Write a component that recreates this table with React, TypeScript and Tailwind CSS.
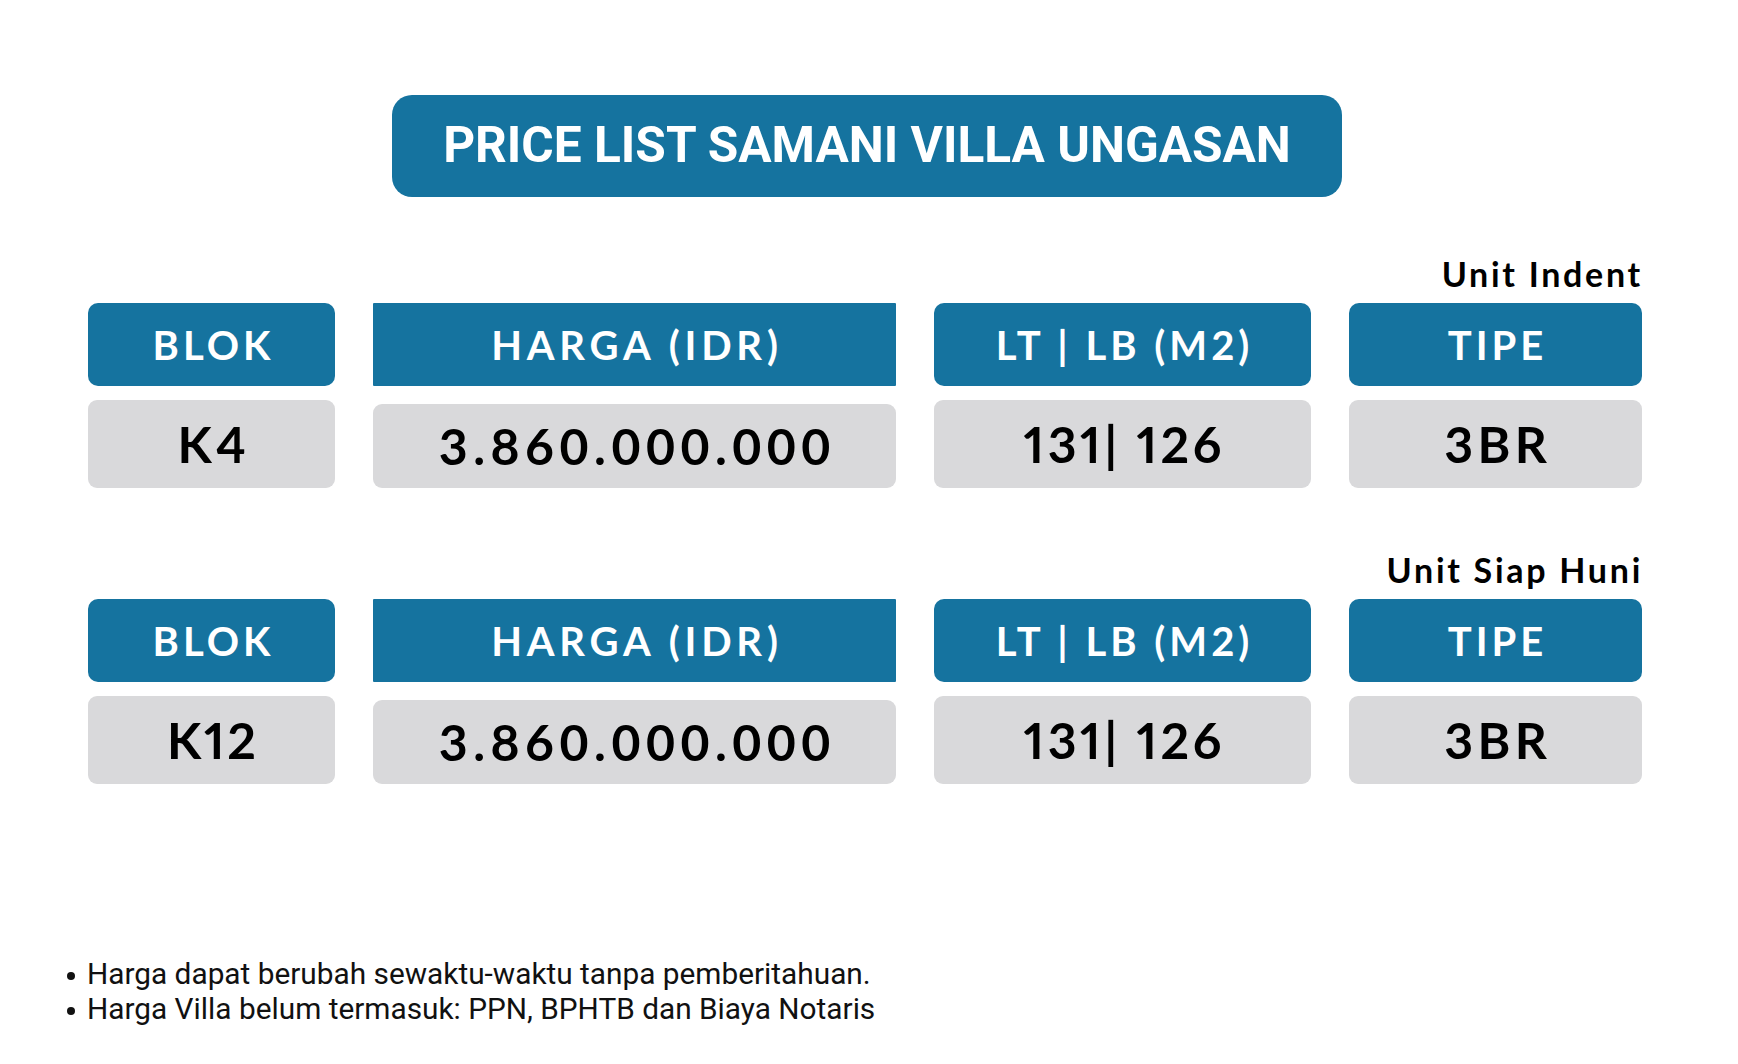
import React from "react";

type Row = { blok: string; blokTrack: string; harga: string; luas: string; tipe: string };

function HeaderCell({
  children,
  square,
  track,
}: {
  children: React.ReactNode;
  square?: boolean;
  track: string;
}) {
  return (
    <div
      className={
        "h-[83px] bg-[#15739f] flex items-center justify-center text-white text-[40px] font-bold font-['Lato',sans-serif] leading-none " +
        (square ? "rounded-[1px]" : "rounded-[10px]")
      }
    >
      <span className={track}>{children}</span>
    </div>
  );
}

function DataCell({
  children,
  short,
  track,
}: {
  children: React.ReactNode;
  short?: boolean;
  track: string;
}) {
  return (
    <div
      className={
        "bg-[#d9d9db] rounded-[9px] flex items-center justify-center text-black text-[50px] font-bold font-['Lato',sans-serif] leading-none " +
        (short ? "h-[84px] self-end" : "h-[88px]")
      }
    >
      <span className={track}>{children}</span>
    </div>
  );
}

function Section({ label, row, top }: { label: string; row: Row; top: string }) {
  return (
    <div className={"ml-[88px] w-[1554px] " + top}>
      <div className="flex justify-end mr-[-1px] h-[34px] leading-[34px] text-[34px] font-bold font-['Lato',sans-serif] text-black tracking-[0.08em]">
        {label}
      </div>
      <div className="mt-[12px] grid grid-cols-[247px_523px_377px_293px] gap-x-[38px] gap-y-[14px]">
        <HeaderCell track="tracking-[0.1em] pl-[0.1em]">BLOK</HeaderCell>
        <HeaderCell square track="tracking-[0.12em] pl-[0.12em]">
          HARGA (IDR)
        </HeaderCell>
        <HeaderCell track="tracking-[0.1em] pl-[0.1em]">LT | LB (M2)</HeaderCell>
        <HeaderCell track="tracking-[0.1em] pl-[0.1em]">TIPE</HeaderCell>
        <DataCell track={row.blokTrack}>{row.blok}</DataCell>
        <DataCell short track="tracking-[0.11em] pl-[0.11em]">
          {row.harga}
        </DataCell>
        <DataCell track="tracking-[0.07em] pl-[0.07em] proportional-nums">{row.luas}</DataCell>
        <DataCell track="tracking-[0.085em] pl-[0.085em]">{row.tipe}</DataCell>
      </div>
    </div>
  );
}

export default function App() {
  const notes = [
    "Harga dapat berubah sewaktu-waktu tanpa pemberitahuan.",
    "Harga Villa belum termasuk: PPN, BPHTB dan Biaya Notaris",
  ];
  return (
    <div className="w-[1738px] h-[1064px] bg-white flex flex-col overflow-hidden">
      <div className="mt-[95px] ml-[392px] self-start w-[950px] h-[102px] rounded-[20px] bg-[#15739f] flex items-center justify-center">
        <span className="text-white text-[49.6px] font-bold font-['Roboto',sans-serif] leading-none">
          PRICE LIST SAMANI VILLA UNGASAN
        </span>
      </div>

      <Section
        top="mt-[60px]"
        label="Unit Indent"
        row={{
          blok: "K4",
          blokTrack: "tracking-[0.09em] pl-[0.09em]",
          harga: "3.860.000.000",
          luas: "131| 126",
          tipe: "3BR",
        }}
      />
      <Section
        top="mt-[65px]"
        label="Unit Siap Huni"
        row={{
          blok: "K12",
          blokTrack: "tracking-[0.055em] pl-[0.055em] proportional-nums",
          harga: "3.860.000.000",
          luas: "131| 126",
          tipe: "3BR",
        }}
      />

      <ul className="mt-[172px] ml-[67px] flex flex-col font-['Roboto',sans-serif] text-[29.8px] leading-[35px] text-[#111]">
        {notes.map((n) => (
          <li key={n} className="flex items-center gap-[12px]">
            <span className="w-[8px] h-[8px] rounded-full bg-[#111] mt-[4px]" />
            <span>{n}</span>
          </li>
        ))}
      </ul>
    </div>
  );
}
